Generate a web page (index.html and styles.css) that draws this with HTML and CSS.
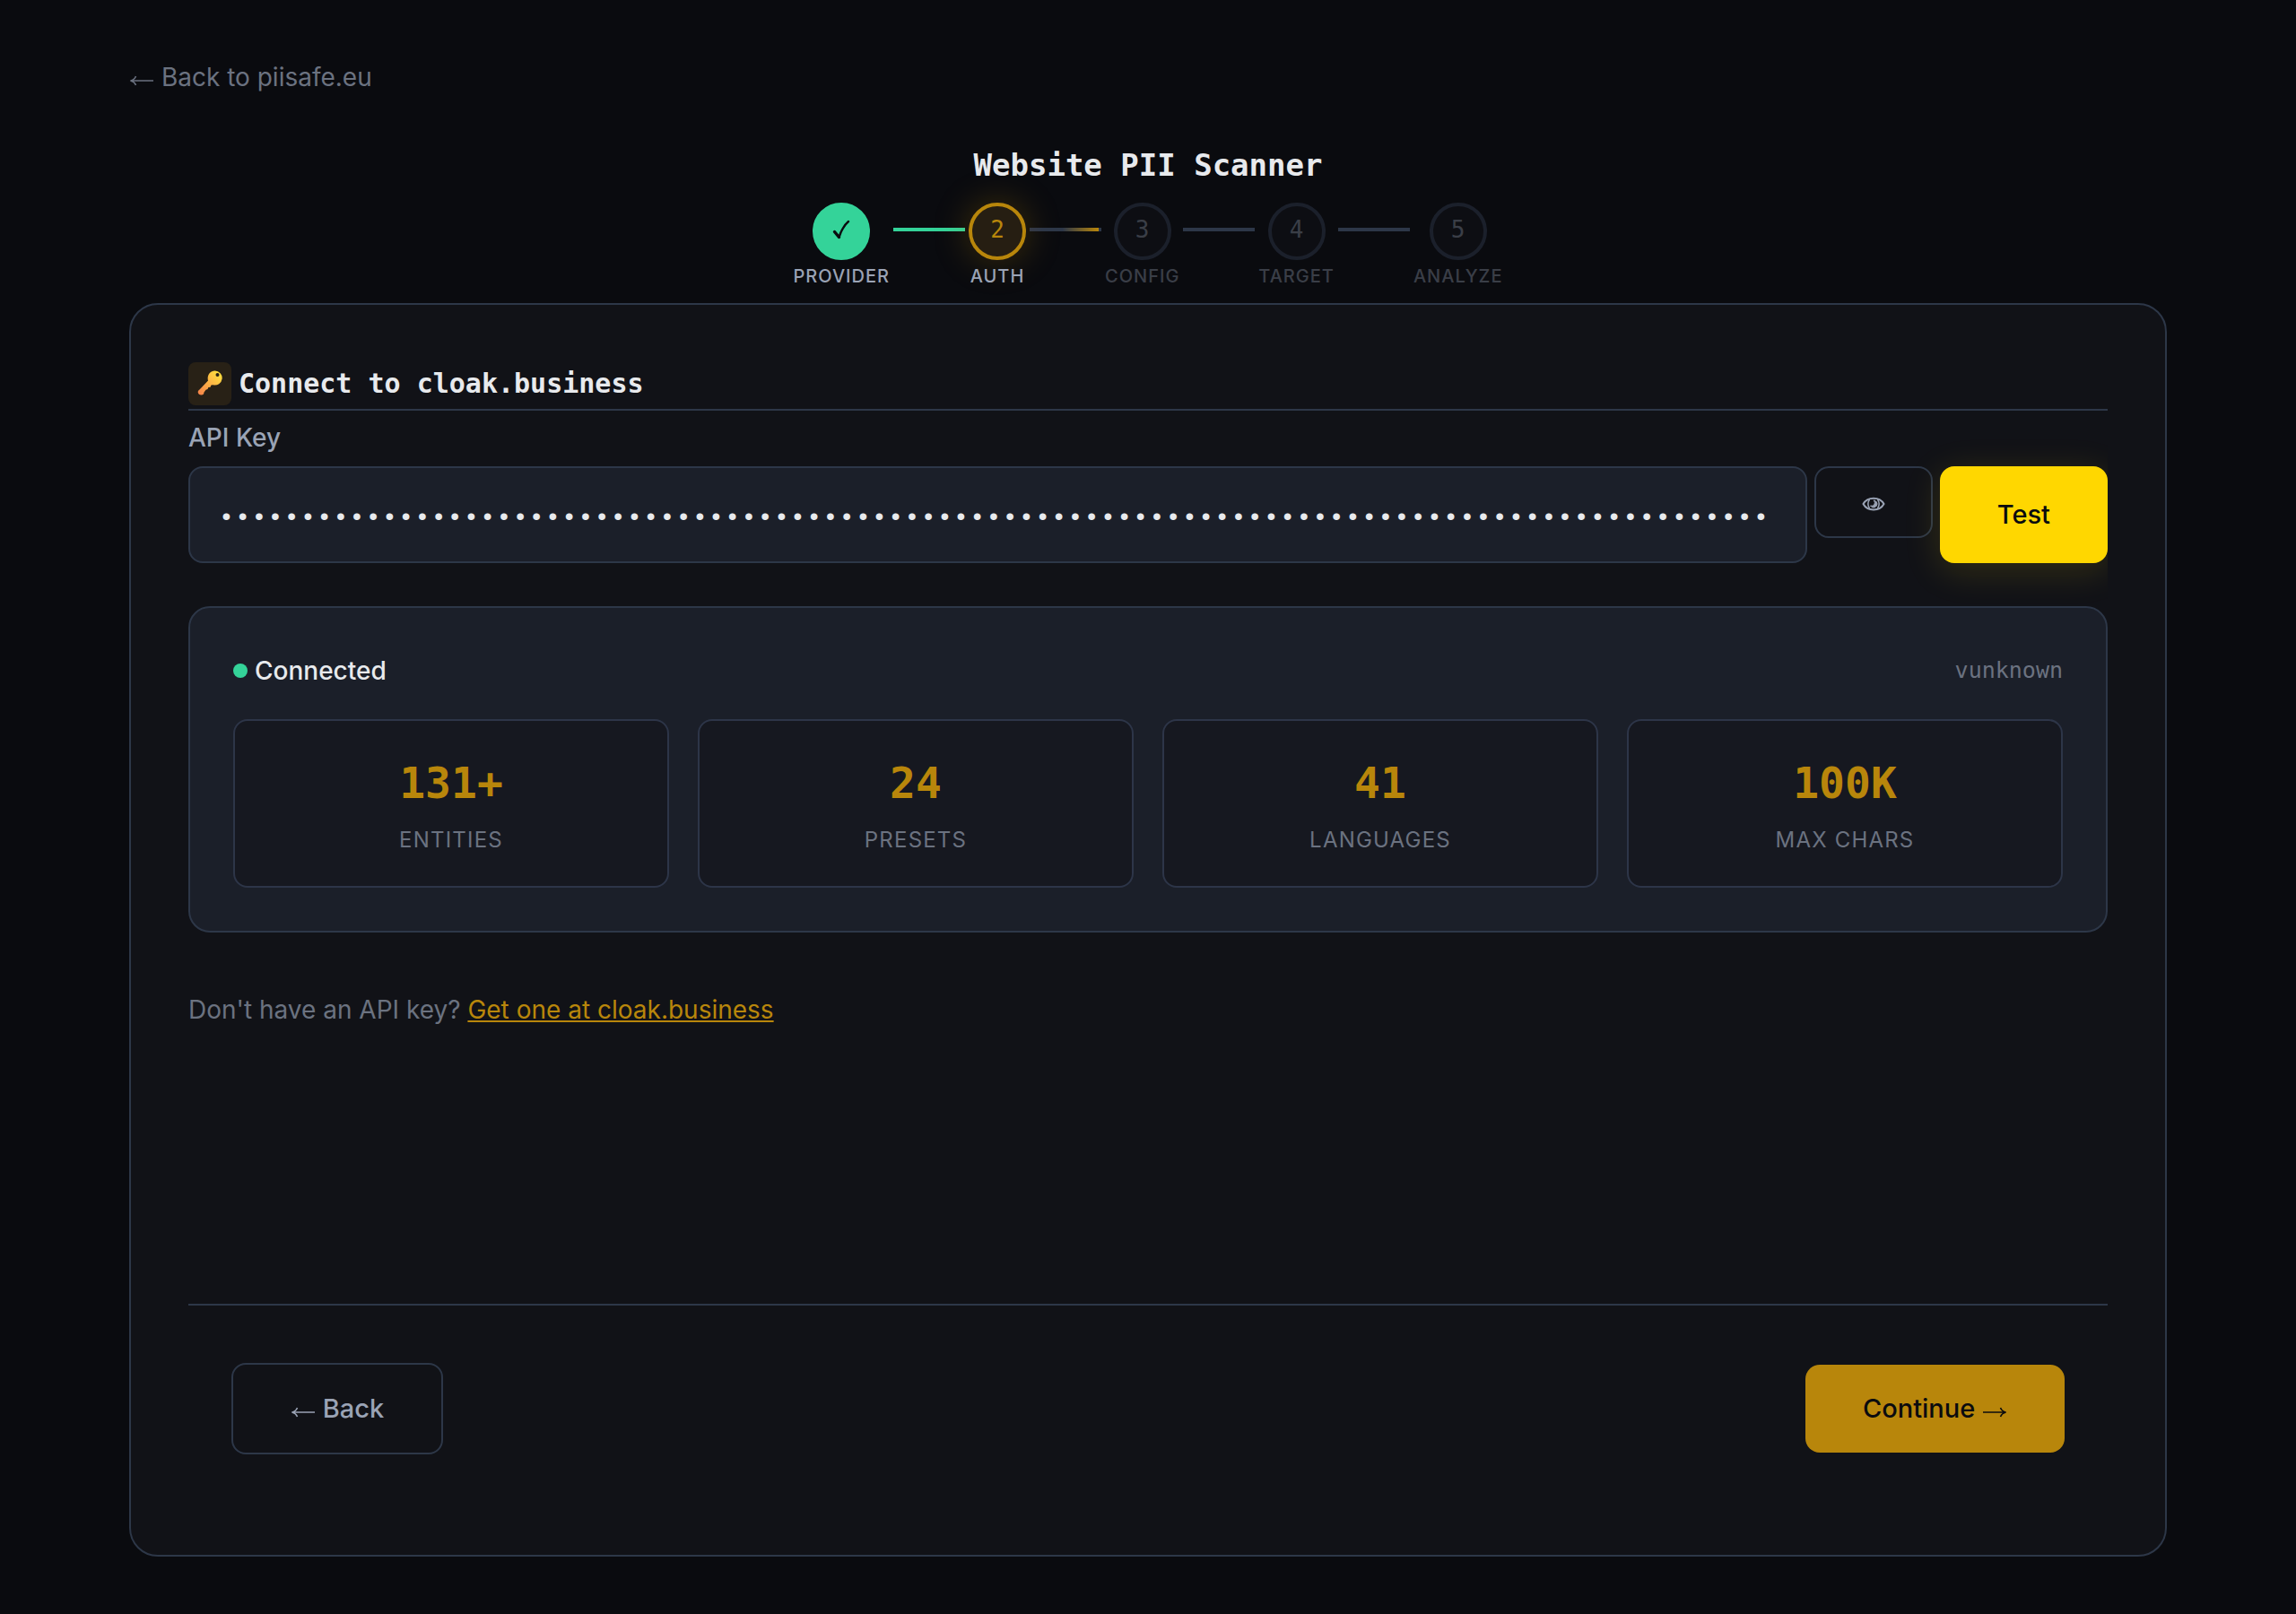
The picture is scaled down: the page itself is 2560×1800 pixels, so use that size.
FILE: index.html
```html
<!DOCTYPE html>
<html lang="en">
<head>
    <meta charset="UTF-8">
    <meta name="viewport" content="width=device-width, initial-scale=1.0">
    <title>Website PII Scanner</title>
    <link rel="stylesheet" href="styles.css">
</head>
<body>
    <div class="page">
        <a class="home-link" href="#"><svg class="arrow" viewBox="0 0 28 12"><path d="M27 6 H2 M7.500 1 C6.500 3.500 4.500 5.300 1.500 6 C4.500 6.700 6.500 8.500 7.500 11"/></svg> Back to piisafe.eu</a>

        <header class="header">
            <h1>Website PII Scanner</h1>
            <ol class="steps">
                <li class="step done">
                    <span class="circle">
                        <svg width="20" height="22" viewBox="0 0 20 22" fill="none" stroke="currentColor" stroke-linecap="round" stroke-linejoin="round">
                            <path d="M2.5 13.5 L7.5 19.5" stroke-width="3.4"/>
                            <path d="M7.5 19.5 C10 12 13 6 18 2" stroke-width="2.4"/>
                        </svg>
                    </span>
                    <span class="step-label">Provider</span>
                </li>
                <li class="line line-done"></li>
                <li class="step active">
                    <span class="circle">2</span>
                    <span class="step-label">Auth</span>
                </li>
                <li class="line line-active"></li>
                <li class="step">
                    <span class="circle">3</span>
                    <span class="step-label">Config</span>
                </li>
                <li class="line"></li>
                <li class="step">
                    <span class="circle">4</span>
                    <span class="step-label">Target</span>
                </li>
                <li class="line"></li>
                <li class="step">
                    <span class="circle">5</span>
                    <span class="step-label">Analyze</span>
                </li>
            </ol>
        </header>

        <main class="card">
            <section class="content">
                <div class="card-title">
                    <span class="title-icon">
                        <svg width="28" height="28" viewBox="0 0 28 28">
                            <defs>
                                <linearGradient id="gold" x1="1" y1="0" x2="0" y2="1">
                                    <stop offset="0" stop-color="#ffe83b"/>
                                    <stop offset="0.45" stop-color="#fdb945"/>
                                    <stop offset="1" stop-color="#f5804a"/>
                                </linearGradient>
                            </defs>
                            <path fill="url(#gold)" d="M19.500 0.500 A8 8 0 1 1 17.500 16.200 L15.500 16.500 L14.500 18.800 L12.300 19 L11.500 21 L9.500 21.800 L7.500 24.500 L7 26.500 C5 28.300 1 27.500 0.700 24.500 C0.700 23 1.500 22.300 2.500 21.500 L12 11.500 C10.500 6 14 0.500 19.500 0.500 Z"/>
                            <circle cx="22.500" cy="5" r="2" fill="#282116"/>
                        </svg>
                    </span>
                    <h2>Connect to cloak.business</h2>
                </div>

                <label class="field-label" for="api-key">API Key</label>
                <div class="key-row">
                    <input class="key-input" type="password" id="api-key" value="cb_0123456789abcdefghijklmnopqrstuvwxyz0123456789abcdefghijklmnopqrstuvwxyz0123456789abcdefghij">
                    <button class="btn eye" type="button" aria-label="Show key">
                        <svg width="26" height="16" viewBox="0 0 26 16" fill="none" stroke="currentColor">
                            <path d="M1.500 8 C6 -0.500 20 -0.500 24.500 8 C20 16.500 6 16.500 1.500 8 Z" stroke-width="2"/>
                            <path d="M8.500 3 C6.500 6 6.500 10 8.500 13 M17.500 3 C19.500 6 19.500 10 17.500 13" stroke-width="1.500"/>
                            <path d="M13 4 A4 4 0 1 1 9.500 10 A3.500 3.500 0 0 0 13 4 Z" fill="currentColor" stroke-width="1"/>
                        </svg>
                    </button>
                    <button class="btn test" type="button">Test</button>
                </div>

                <div class="status">
                    <div class="status-head">
                        <span class="status-dot"></span>
                        <span class="status-text">Connected</span>
                        <span class="version">vunknown</span>
                    </div>
                    <div class="stats">
                        <div class="stat"><span class="stat-value">131+</span><span class="stat-label">Entities</span></div>
                        <div class="stat"><span class="stat-value">24</span><span class="stat-label">Presets</span></div>
                        <div class="stat"><span class="stat-value">41</span><span class="stat-label">Languages</span></div>
                        <div class="stat"><span class="stat-value">100K</span><span class="stat-label">Max Chars</span></div>
                    </div>
                </div>

                <p class="hint">Don't have an API key? <a href="#">Get one at cloak.business</a></p>
            </section>

            <footer class="actions">
                <button class="btn back" type="button"><svg class="arrow" viewBox="0 0 28 12"><path d="M27 6 H2 M7.500 1 C6.500 3.500 4.500 5.300 1.500 6 C4.500 6.700 6.500 8.500 7.500 11"/></svg> Back</button>
                <button class="btn continue" type="button">Continue <svg class="arrow" viewBox="0 0 28 12"><path d="M1 6 H26 M20.500 1 C21.500 3.500 23.500 5.300 26.500 6 C23.500 6.700 21.500 8.500 20.500 11"/></svg></button>
            </footer>
        </main>
    </div>
</body>
</html>
```

FILE: styles.css
```css
* {
    box-sizing: border-box;
    margin: 0;
    padding: 0;
}
body {
    background: #0a0b0f;
    color: #e8eaed;
    font-family: Inter, sans-serif;
    font-size: 28px;
    line-height: 44px;
}
.page {
    display: flex;
    flex-direction: column;
    min-height: 100vh;
    padding: 64px 144px;
}
.home-link {
    align-self: flex-start;
    color: #6b7280;
    text-decoration: none;
}
.arrow {
    width: 28px;
    height: 12px;
    fill: none;
    stroke: currentColor;
    stroke-width: 1.6;
}

/* header and steps */
.header {
    display: flex;
    flex-direction: column;
    align-items: center;
    padding: 52px 0 16px;
}
h1, h2 {
    font-family: "DejaVu Sans Mono", monospace;
    font-weight: 700;
}
h1 {
    font-size: 34px;
    line-height: 48px;
    margin-bottom: 18px;
}
.steps {
    display: flex;
    gap: 4px;
    list-style: none;
}
.step {
    display: flex;
    flex-direction: column;
    align-items: center;
    gap: 4px;
    opacity: 0.5;
}
.step.done, .step.active {
    opacity: 1;
}
.circle {
    display: flex;
    align-items: center;
    justify-content: center;
    width: 64px;
    height: 64px;
    padding-bottom: 4px;
    border: 4px solid #2d3548;
    border-radius: 50%;
    background: #111217;
    color: #6b7280;
    font-family: "DejaVu Sans Mono", monospace;
    font-size: 26px;
}
.done .circle {
    background: #34d399;
    border-color: #34d399;
    color: #0a0b0f;
}
.active .circle {
    background: #261e12;
    border-color: #b8860b;
    color: #b8860b;
    box-shadow: 0 0 40px rgba(184, 134, 11, 0.3);
}
.step-label {
    color: #6b7280;
    font-size: 20px;
    font-weight: 500;
    line-height: 28px;
    letter-spacing: 0.05em;
    text-transform: uppercase;
}
.done .step-label, .active .step-label {
    color: #9aa3b5;
}
.line {
    width: 80px;
    height: 4px;
    margin-top: 28px;
    background: #2d3748;
}
.line-done {
    background: #34d399;
}
.line-active {
    background: linear-gradient(90deg, #363a45, #2d3748 20%, #2d3748 46%, #b8860b 96%, #2d3748 96%);
}

/* card */
.card {
    flex: 1;
    display: flex;
    flex-direction: column;
    padding: 64px;
    background: #111217;
    border: 2px solid #2d3748;
    border-radius: 32px;
}
.content {
    flex: 1;
    overflow: hidden;
}
.card-title {
    display: flex;
    align-items: center;
    gap: 8px;
    padding-bottom: 4px;
    border-bottom: 2px solid #2d3748;
}
.title-icon {
    display: flex;
    align-items: center;
    justify-content: center;
    width: 48px;
    height: 48px;
    padding-bottom: 2px;
    border-radius: 8px;
    background: #282116;
}
h2 {
    font-size: 30px;
}
.field-label {
    display: block;
    margin: 8px 0 10px;
    color: #9aa3b5;
    font-weight: 500;
}
.key-row {
    display: flex;
    align-items: flex-start;
    gap: 8px;
}
.key-input {
    flex: 1;
    min-width: 0;
    height: 108px;
    padding: 6px 32px 0;
    background: #1b1f29;
    border: 2px solid #2d3748;
    border-radius: 16px;
    color: #e8eaed;
    font-family: "Liberation Mono", monospace;
    font-size: 28px;
    letter-spacing: 0.05em;
}
.btn {
    border: 2px solid #2d3748;
    border-radius: 16px;
    background: transparent;
    color: #9aa3b5;
    font-family: inherit;
    font-size: 29px;
    font-weight: 500;
    line-height: 34px;
    cursor: pointer;
}
.eye {
    display: flex;
    align-items: center;
    justify-content: center;
    width: 132px;
    height: 80px;
    padding-top: 4px;
}
.test {
    height: 108px;
    padding: 0 64px;
    border: 0;
    background: #ffd700;
    color: #0a0b0f;
    box-shadow: 0 8px 40px rgba(255, 215, 0, 0.15);
}

/* connection status */
.status {
    margin-top: 48px;
    padding: 48px;
    background: #1b1f29;
    border: 2px solid #2d3748;
    border-radius: 24px;
}
.status-head {
    display: flex;
    align-items: center;
    gap: 8px;
    margin-bottom: 32px;
}
.status-dot {
    width: 16px;
    height: 16px;
    border-radius: 50%;
    background: #34d399;
}
.status-text {
    font-weight: 500;
}
.version {
    margin-left: auto;
    color: #6b7280;
    font-family: "DejaVu Sans Mono", monospace;
    font-size: 25px;
}
.stats {
    display: grid;
    grid-template-columns: repeat(4, 1fr);
    gap: 32px;
}
.stat {
    display: flex;
    flex-direction: column;
    align-items: center;
    gap: 24px;
    padding: 40px;
    background: #161820;
    border: 2px solid #2d3548;
    border-radius: 16px;
}
.stat-value {
    color: #b8860b;
    font-family: "DejaVu Sans Mono", monospace;
    font-size: 48px;
    font-weight: 700;
    line-height: 58px;
}
.stat-label {
    color: #6b7280;
    font-size: 24px;
    line-height: 22px;
    letter-spacing: 0.05em;
    text-transform: uppercase;
}
.hint {
    margin-top: 64px;
    color: #6b7280;
}
.hint a {
    color: #b8860b;
}

/* bottom buttons */
.actions {
    display: flex;
    align-items: center;
    justify-content: space-between;
    padding: 64px 48px 48px;
    border-top: 2px solid #2d3748;
}
.back {
    padding: 32px 64px;
}
.continue {
    padding: 32px 64px;
    border: 0;
    background: #b8860b;
    color: #0a0b0f;
}
```
